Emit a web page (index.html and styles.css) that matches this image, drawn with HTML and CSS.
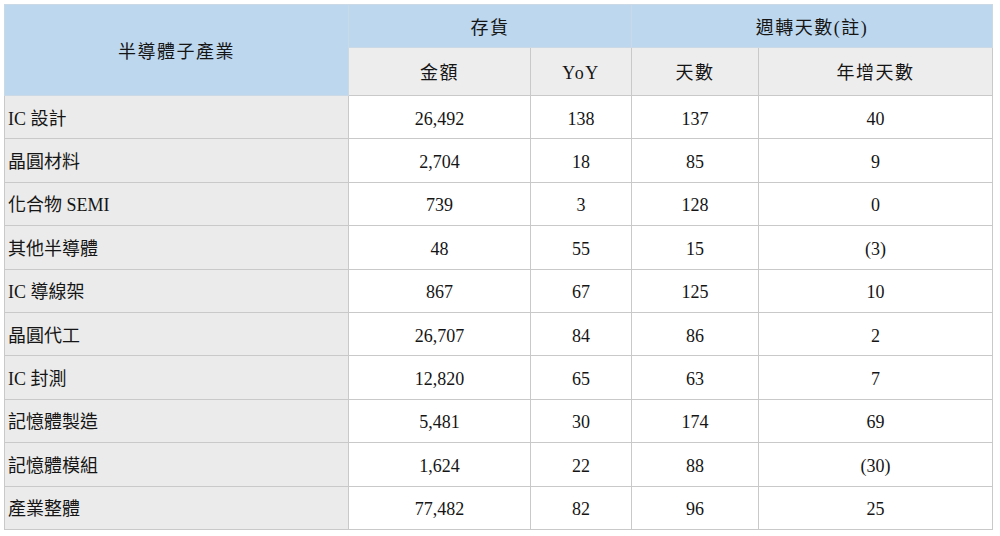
FILE: index.html
```html
<!DOCTYPE html>
<html lang="zh-Hant">
<head>
<meta charset="utf-8">
<title>半導體子產業 存貨</title>
<link rel="stylesheet" href="styles.css">
</head>
<body>
<table class="inv">
  <colgroup>
    <col class="c-name">
    <col class="c-amt">
    <col class="c-yoy">
    <col class="c-days">
    <col class="c-inc">
  </colgroup>
  <thead>
    <tr class="h1">
      <th rowspan="2" class="blue">半導體子產業</th>
      <th colspan="2" class="blue">存貨</th>
      <th colspan="2" class="blue">週轉天數(註)</th>
    </tr>
    <tr class="h2">
      <th class="sub">金額</th>
      <th class="sub">YoY</th>
      <th class="sub">天數</th>
      <th class="sub">年增天數</th>
    </tr>
  </thead>
  <tbody>
    <tr><td class="name">IC 設計</td><td>26,492</td><td>138</td><td>137</td><td>40</td></tr>
    <tr><td class="name">晶圓材料</td><td>2,704</td><td>18</td><td>85</td><td>9</td></tr>
    <tr><td class="name">化合物 SEMI</td><td>739</td><td>3</td><td>128</td><td>0</td></tr>
    <tr><td class="name">其他半導體</td><td>48</td><td>55</td><td>15</td><td>(3)</td></tr>
    <tr><td class="name">IC 導線架</td><td>867</td><td>67</td><td>125</td><td>10</td></tr>
    <tr><td class="name">晶圓代工</td><td>26,707</td><td>84</td><td>86</td><td>2</td></tr>
    <tr><td class="name">IC 封測</td><td>12,820</td><td>65</td><td>63</td><td>7</td></tr>
    <tr><td class="name">記憶體製造</td><td>5,481</td><td>30</td><td>174</td><td>69</td></tr>
    <tr><td class="name">記憶體模組</td><td>1,624</td><td>22</td><td>88</td><td>(30)</td></tr>
    <tr><td class="name">產業整體</td><td>77,482</td><td>82</td><td>96</td><td>25</td></tr>
  </tbody>
</table>
</body>
</html>
```

FILE: styles.css
```css
html, body {
  margin: 0;
  padding: 0;
  background: #ffffff;
}

body {
  padding: 4px 0 0 4px;
}

.inv {
  border-collapse: collapse;
  table-layout: fixed;
  width: 988px;
  font-family: "Liberation Serif", "Noto Sans CJK TC", serif;
  font-size: 18px;
  color: #151515;
  border: 1px solid #c4c4c4;
}

.c-name { width: 344px; }
.c-amt { width: 182px; }
.c-yoy { width: 101px; }
.c-days { width: 127px; }
.c-inc { width: 234px; }

.inv th,
.inv td {
  border: 1px solid #c9c9c9;
  padding: 3px 3px 0;
  text-align: center;
  vertical-align: middle;
  font-weight: normal;
  line-height: 20px;
}

.h1 { height: 43px; }
.h2 { height: 48px; }
.inv tbody tr { height: 43.4px; }

.blue {
  background: #bdd7ee;
  border-color: #cbd9e6 !important;
  letter-spacing: 1.5px;
}

.sub {
  background: #ededed;
  letter-spacing: 1.5px;
}

.inv td.name {
  background: #ebebeb;
  text-align: left;
  padding-left: 3px;
}

.inv td {
  background: #ffffff;
}
```
